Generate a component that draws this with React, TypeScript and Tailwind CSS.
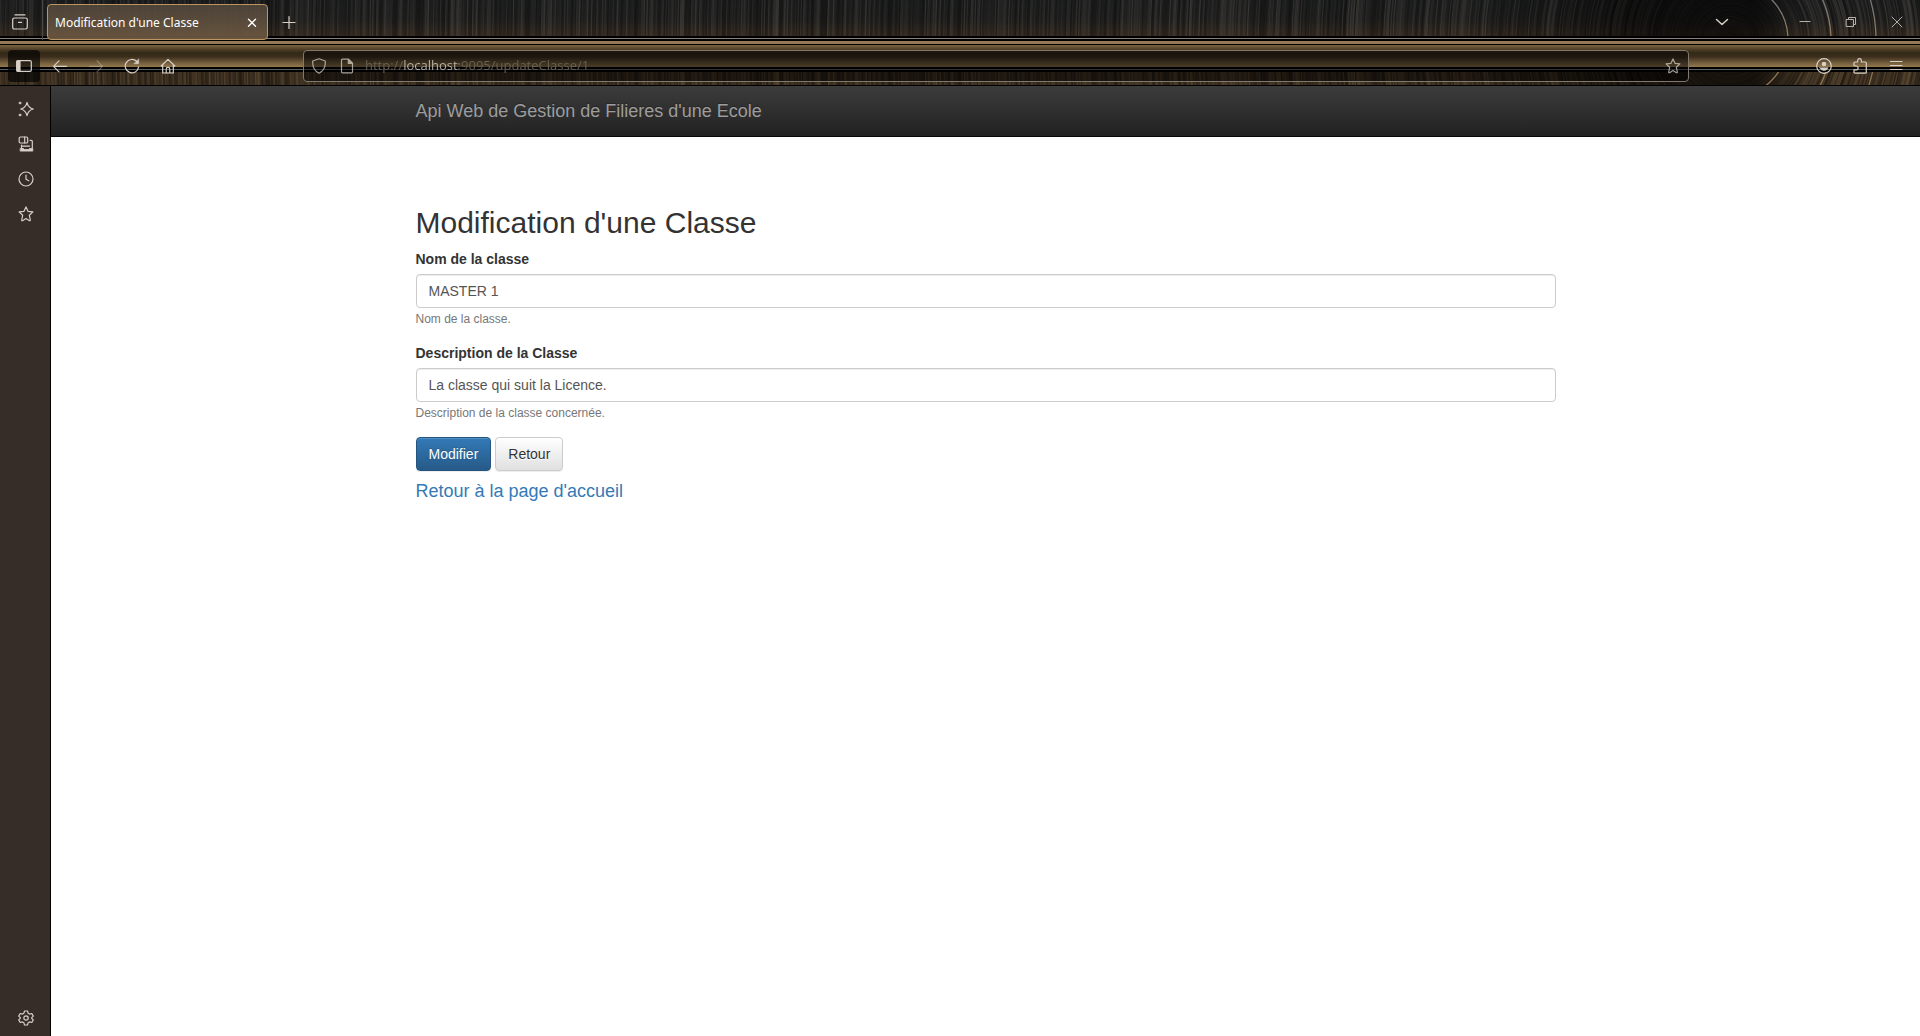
import type { ReactNode } from "react";

/* Deterministic noise so that the brushed-metal theme always looks the same. */
function noise(n: number) {
  const v = Math.sin(n * 127.1 + 311.7) * 43758.5453;
  return v - Math.floor(v);
}

const CX = 1730;
const CY = 40;

function Grooves({ light, dark, depth }: { light: string; dark: string; depth: number }) {
  const rings: ReactNode[] = [];
  for (let i = 0; i < 1300; i++) {
    const r = 6 + i * 1.35;
    const k = noise(i) * 0.75 + noise(Math.floor(i / 7) + 5000) * 0.25;
    const strong = r > 60 ? 1 : 0.45;
    rings.push(
      <circle
        key={i}
        cx={CX}
        cy={CY}
        r={r}
        stroke={k > 0.5 ? light : dark}
        strokeWidth={1 + noise(i + 77) * 0.6}
        opacity={Math.abs(k - 0.5) * depth * strong}
      />
    );
  }
  return <g fill="none">{rings}</g>;
}

function ThemeBackdrop() {
  return (
    <svg
      aria-hidden="true"
      className="pointer-events-none absolute inset-0 h-full w-full"
      viewBox="0 0 1920 86"
      preserveAspectRatio="xMaxYMin slice"
    >
      <defs>
        <linearGradient id="steel" x1="0" y1="0" x2="0" y2="1">
          <stop offset="0" stopColor="#1d1e1f" />
          <stop offset="0.55" stopColor="#20201f" />
          <stop offset="1" stopColor="#33291f" />
        </linearGradient>
        <linearGradient id="brass" x1="0" y1="0" x2="0" y2="1">
          <stop offset="0" stopColor="#7a6540" />
          <stop offset="0.2" stopColor="#4f3f26" />
          <stop offset="0.36" stopColor="#332818" />
          <stop offset="0.52" stopColor="#3a2d1c" />
          <stop offset="0.8" stopColor="#705b3b" />
          <stop offset="1" stopColor="#94794f" />
        </linearGradient>
        <linearGradient id="shade" x1="0" y1="0" x2="1" y2="0">
          <stop offset="0" stopColor="#000" stopOpacity="0" />
          <stop offset="0.45" stopColor="#000" stopOpacity="0.55" />
          <stop offset="0.85" stopColor="#000" stopOpacity="0.6" />
          <stop offset="1" stopColor="#000" stopOpacity="0" />
        </linearGradient>
        <linearGradient id="arc" gradientUnits="userSpaceOnUse" x1="0" y1="0" x2="0" y2="86">
          <stop offset="0" stopColor="#77777a" />
          <stop offset="0.42" stopColor="#93795a" />
          <stop offset="1" stopColor="#8d7450" />
        </linearGradient>
        <clipPath id="upper">
          <rect width="1920" height="36" />
        </clipPath>
        <clipPath id="lower">
          <rect y="72" width="1920" height="13" />
        </clipPath>
        <clipPath id="upperRight">
          <rect x="1730" width="190" height="36" />
        </clipPath>
        <clipPath id="lowerRight">
          <rect x="1730" y="72" width="190" height="13" />
        </clipPath>
      </defs>
      <rect width="1920" height="86" fill="#000" />
      <g clipPath="url(#upper)">
        <rect width="1920" height="36" fill="url(#steel)" />
        <Grooves light="#5c564e" dark="#050505" depth={0.9} />
        <rect x="1500" width="300" height="36" fill="url(#shade)" />
      </g>
      <rect y="38" width="1920" height="1" fill="#87807a" />
      <rect y="41" width="1920" height="3" fill="#937a56" />
      <rect y="45" width="1920" height="22" fill="url(#brass)" />
      <rect y="69" width="1920" height="1" fill="#5c6063" />
      <g clipPath="url(#lower)">
        <rect y="72" width="1920" height="13" fill="#3a2e20" />
        <Grooves light="#705c3e" dark="#0c0905" depth={1.1} />
        <rect x="1500" y="72" width="300" height="13" fill="url(#shade)" />
      </g>
      {["url(#upperRight)", "url(#lowerRight)"].map((clip) => (
        <g key={clip} clipPath={clip} fill="none" stroke="url(#arc)" strokeWidth="1.3">
          <circle cx={CX} cy={CY} r="58" />
          <circle cx={CX} cy={CY} r="101" />
          <circle cx={CX} cy={CY} r="146" />
        </g>
      ))}
    </svg>
  );
}

function Icon({ children, className = "" }: { children: ReactNode; className?: string }) {
  return (
    <svg
      viewBox="0 0 16 16"
      className={`h-4 w-4 shrink-0 ${className}`}
      fill="none"
      stroke="currentColor"
      strokeWidth="1.2"
      strokeLinecap="round"
      strokeLinejoin="round"
      aria-hidden="true"
    >
      {children}
    </svg>
  );
}

const STAR =
  "M8 .9 10 5.3l4.9.6-3.6 3.3 1 4.8c.1.6-.4.9-.9.7L8 12.6l-3.400 2.100c-.5.2-1-.1-.9-.7l1-4.800L1.100 5.900 6 5.300Z";

function IconButton({
  label,
  size = "h-8 w-9",
  className = "",
  children,
}: {
  label: string;
  size?: string;
  className?: string;
  children: ReactNode;
}) {
  return (
    <button
      type="button"
      aria-label={label}
      className={`flex shrink-0 items-center justify-center ${size} ${className}`}
    >
      {children}
    </button>
  );
}

function TabStrip() {
  return (
    <div className="relative flex h-10 items-end">
      <div className="flex h-10 w-[43px] items-center justify-center border-r border-[#4a4845] pr-[2px] pt-1">
        <IconButton label="Afficher les onglets récents" size="h-8 w-8">
          <Icon>
            <path d="M3 .9h10M2.400 4h11.200c1 0 1.700.7 1.700 1.600v7.700c0 1-.7 1.700-1.700 1.700H2.400c-1 0-1.700-.7-1.700-1.700V5.600C.7 4.700 1.400 4 2.400 4ZM6.400 8.300h3.200" />
          </Icon>
        </IconButton>
      </div>
      <div className="ml-1 flex h-9 w-[221px] items-center justify-between rounded border border-[#bd9560] bg-linear-to-b from-[#51473b]/90 to-[#6a5640]/95 pl-[7px] pr-[7px] pt-px">
        <span className="truncate font-['Noto_Sans','Open_Sans',sans-serif] text-[12px] text-white">
          Modification d'une Classe
        </span>
        <IconButton label="Fermer l'onglet" size="h-4 w-4" className="text-white">
          <Icon>
            <path d="m4.500 4.300 7 7m0-7-7 7" strokeWidth="1.400" />
          </Icon>
        </IconButton>
      </div>
      <IconButton label="Nouvel onglet" size="h-9 w-[42px]">
        <Icon>
          <path d="M8 2.500v12M2 8.500h12" />
        </Icon>
      </IconButton>
      <div className="flex-1" />
      <IconButton label="Lister tous les onglets" size="h-9 w-10">
        <Icon>
          <path d="m2.500 5.500 5.500 5 5.500-5" strokeWidth="1.500" />
        </Icon>
      </IconButton>
      <div className="ml-10 flex text-[#b5b0a8]">
        <IconButton label="Réduire" size="h-9 w-[46px]">
          <Icon>
            <path d="M3 7.500h10" strokeWidth="1" />
          </Icon>
        </IconButton>
        <IconButton label="Restaurer" size="h-9 w-[46px]">
          <Icon>
            <path d="M3.500 5.500h7v7h-7zM5.500 5V3.500h7v7H11" strokeWidth="1" strokeLinejoin="miter" />
          </Icon>
        </IconButton>
        <IconButton label="Fermer" size="h-9 w-[46px]">
          <Icon>
            <path d="m3 3 10 10M13 3 3 13" strokeWidth="1" />
          </Icon>
        </IconButton>
      </div>
    </div>
  );
}

function Toolbar() {
  return (
    <div className="relative flex h-[46px] items-center pb-1 pl-2 pr-[6px] pt-[9px]">
      <IconButton label="Barre latérale" size="h-8 w-8" className="rounded bg-black/65">
        <Icon>
          <rect x=".7" y="2.600" width="14.600" height="10.800" rx="1.300" />
          <path d="M1 3h3v10H1z" fill="currentColor" />
        </Icon>
      </IconButton>
      <div className="ml-[2px] flex">
        <IconButton label="Page précédente">
          <Icon>
            <path d="M14.500 8.300H1.500M7 2.800 1.500 8.300 7 13.800" />
          </Icon>
        </IconButton>
        <IconButton label="Page suivante" className="opacity-40">
          <Icon>
            <path d="M1.500 8.300h13M9 2.800l5.500 5.500L9 13.800" />
          </Icon>
        </IconButton>
        <IconButton label="Actualiser">
          <Icon>
            <path d="M14.600 9.200A6.700 6.700 0 1 1 12.600 3.300" />
            <path d="M14.700 1.200v4.500h-4.500z" fill="currentColor" strokeWidth=".5" />
          </Icon>
        </IconButton>
        <IconButton label="Accueil">
          <Icon>
            <path d="M1.200 8 8 1.400 14.800 8M2.700 7v8h10.600V7M6.200 15v-4c0-1 .7-1.700 1.800-1.700S9.800 10 9.800 11v4" />
          </Icon>
        </IconButton>
      </div>
      <div className="ml-[117px] flex h-8 flex-1 items-center rounded border border-[#81796d] bg-black/50 px-[7px]">
        <Icon className="opacity-75">
          <path d="M8 .8 14.300 3c.3 5-1.300 9.700-6.300 12.200C3 12.700 1.400 8 1.700 3Z" />
        </Icon>
        <Icon className="ml-3 opacity-75">
          <path d="M9.500 1.200H3.600C2.900 1.200 2.500 1.600 2.500 2.300v11.400c0 .7.4 1.100 1.100 1.100h8.800c.7 0 1.100-.4 1.100-1.100V5.200Z" />
          <path d="M9.300 1.500v3.800h3.900z" fill="currentColor" />
        </Icon>
        <input
          type="text"
          aria-label="Adresse"
          defaultValue="http://localhost:9095/updateClasse/1"
          className="ml-[10px] min-w-0 flex-1 bg-[linear-gradient(to_right,#6a6154_39px,#b9b4ab_39px,#b9b4ab_94px,#6a6154_94px)] bg-clip-text pt-px text-[13px] text-transparent outline-none"
        />
        <IconButton label="Marquer cette page" size="h-4 w-4" className="opacity-75">
          <Icon>
            <path d={STAR} />
          </Icon>
        </IconButton>
      </div>
      <div className="ml-[117px] flex">
        <IconButton label="Compte">
          <Icon>
            <circle cx="8" cy="8" r="7.300" />
            <circle cx="8" cy="6" r="2.300" fill="currentColor" stroke="none" />
            <path d="M3.800 9.700h8.400A4.900 4.900 0 0 1 8 12.600a4.900 4.900 0 0 1-4.200-2.900Z" fill="currentColor" strokeWidth=".6" />
          </Icon>
        </IconButton>
        <IconButton label="Extensions">
          <Icon>
            <path d="M2 7.500V5c0-.6.4-1 1-1h2.700V2.500a1.800 1.800 0 0 1 3.600 0V4h4c.6 0 1 .4 1 1v9.200c0 .6-.4 1-1 1H3c-.6 0-1-.4-1-1v-2.400h2.200a1.900 1.900 0 0 0 0-3.800Z" />
          </Icon>
        </IconButton>
        <IconButton label="Menu">
          <Icon>
            <path d="M2.500 3.500h11.500M2.500 7.500h11.500M2.500 11.500h11.500" />
          </Icon>
        </IconButton>
      </div>
    </div>
  );
}

function Sidebar() {
  return (
    <aside className="flex w-[51px] shrink-0 flex-col items-center gap-[19px] border-r border-black bg-[#362c28] pb-[10px] pl-[2px] pt-[15px] text-[#d8d0c6]">
      <IconButton label="Assistant IA" size="h-4 w-4">
        <Icon>
          <path d="M9 1.300c.8 4 2.300 5.700 6.300 6.700C11.300 9 9.800 10.700 9 14.700 8.200 10.700 6.700 9 2.700 8 6.700 7 8.200 5.300 9 1.300Z" />
          <circle cx="2" cy="2" r="1.100" fill="currentColor" strokeWidth=".5" />
          <circle cx="2" cy="14" r="1.100" fill="currentColor" strokeWidth=".5" />
        </Icon>
      </IconButton>
      <IconButton label="Onglets synchronisés" size="h-4 w-4">
        <Icon>
          <rect x="1.200" y="1" width="8.500" height="6" rx="1.200" />
          <path d="M6.700 1v6M3.500 9v3.500M12 4.300h1.200c.7 0 1.100.4 1.100 1v6.500M4.500 10.200h7" />
          <path d="M2.500 12.500h3l1 1h4l1-1h3.300v2.600H2.500z" fill="currentColor" strokeWidth=".8" />
        </Icon>
      </IconButton>
      <IconButton label="Historique" size="h-4 w-4">
        <Icon>
          <circle cx="8" cy="8" r="7" />
          <path d="M8 4v4.300l2.800 1.500" />
        </Icon>
      </IconButton>
      <IconButton label="Marque-pages" size="h-4 w-4">
        <Icon>
          <path d={STAR} />
        </Icon>
      </IconButton>
      <div className="flex-1" />
      <IconButton label="Personnaliser la barre latérale" size="h-4 w-4">
        <Icon>
          <circle cx="8" cy="8" r="2.200" />
          <path d="M6.500 1h3l.6 2.200 1.500.9 2.200-.6 1.500 2.600L13.700 7.700v.7l1.600 1.600-1.500 2.500-2.200-.6-1.500.9L9.500 15h-3l-.6-2.200-1.500-.9-2.200.6L.7 9.900l1.600-1.600v-.7L.7 6.100l1.500-2.600 2.200.6 1.500-.9Z" />
        </Icon>
      </IconButton>
    </aside>
  );
}

function Field({ id, label, value, help }: { id: string; label: string; value: string; help: string }) {
  return (
    <div className="mb-[15px] flex flex-col items-start">
      <label htmlFor={id} className="mb-[5px] font-bold">
        {label}
      </label>
      <input
        id={id}
        type="text"
        defaultValue={value}
        aria-describedby={`${id}-help`}
        className="h-[34px] w-full rounded border border-[#ccc] bg-white px-3 text-[14px] text-[#555] shadow-[inset_0_1px_1px_rgba(0,0,0,0.075)]"
      />
      <small id={`${id}-help`} className="pt-[2px] text-[12px] leading-[18px] text-[#777]">
        {help}
      </small>
    </div>
  );
}

function EditPage() {
  return (
    <div className="min-w-0 flex-1 bg-white font-['Liberation_Sans',Arial,sans-serif] text-[14px] leading-5 text-[#333]">
      <nav className="h-[51px] border-b border-[#080808] bg-linear-to-b from-[#3c3c3c] to-[#222]">
        <div className="mx-auto max-w-[1170px] px-[15px] py-[15px]">
          <a href="#" className="block w-fit text-[18px] text-[#9d9d9d] [text-shadow:0_-1px_0_rgba(0,0,0,0.25)]">
            Api Web de Gestion de Filieres d'une Ecole
          </a>
        </div>
      </nav>
      <main className="mx-auto max-w-[1170px] px-[15px] pt-[69px]">
        <h2 className="mb-[10px] text-[30px] leading-[33px]">Modification d'une Classe</h2>
        <form>
          <Field id="nom" label="Nom de la classe" value="MASTER 1" help="Nom de la classe." />
          <Field
            id="description"
            label="Description de la Classe"
            value="La classe qui suit la Licence."
            help="Description de la classe concernée."
          />
          <div className="flex gap-1">
            <button
              type="button"
              className="h-[34px] rounded border border-[#245580] bg-linear-to-b from-[#337ab7] to-[#265a88] px-3 text-white shadow-[inset_0_1px_0_rgba(255,255,255,0.15),0_1px_1px_rgba(0,0,0,0.075)] [text-shadow:0_-1px_0_rgba(0,0,0,0.2)]"
            >
              Modifier
            </button>
            <button
              type="button"
              className="h-[34px] rounded border border-[#ccc] bg-linear-to-b from-white to-[#e0e0e0] px-3 shadow-[inset_0_1px_0_rgba(255,255,255,0.15),0_1px_1px_rgba(0,0,0,0.075)] [text-shadow:0_1px_0_#fff]"
            >
              Retour
            </button>
          </div>
        </form>
        <h4 className="mt-[10px] text-[18px]">
          <a href="#" className="text-[#337ab7]">
            Retour à la page d'accueil
          </a>
        </h4>
      </main>
    </div>
  );
}

export default function App() {
  return (
    <div className="flex min-h-screen flex-col bg-[#362c28]">
      <header className="relative overflow-hidden font-['Open_Sans','Noto_Sans',sans-serif] text-[#d8d0c6]">
        <ThemeBackdrop />
        <TabStrip />
        <Toolbar />
      </header>
      <div className="flex flex-1">
        <Sidebar />
        <EditPage />
      </div>
    </div>
  );
}
